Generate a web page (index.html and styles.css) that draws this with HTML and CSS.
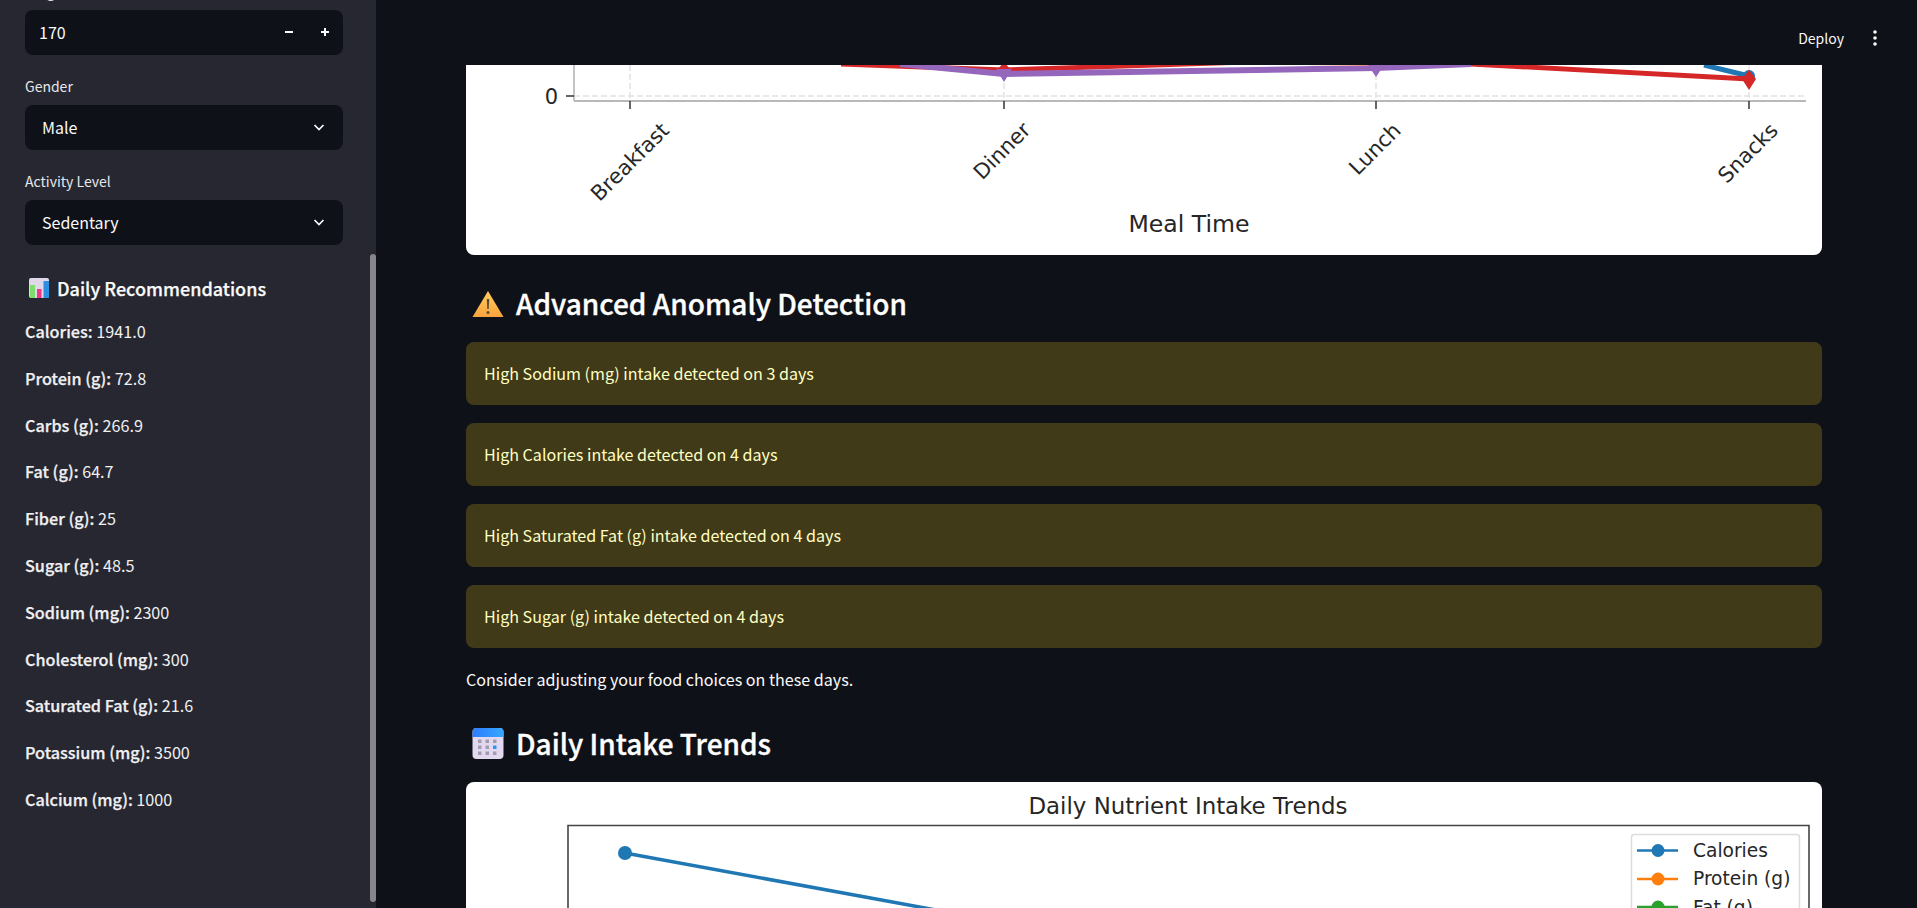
FILE: index.html
```html
<!DOCTYPE html>
<html lang="en">
<head>
    <meta charset="UTF-8">
    <title>Nutrition Dashboard</title>
    <link rel="stylesheet" href="styles.css">
</head>
<body>
    <aside class="sidebar">
        <div class="field field-cut">
            <label class="field-label">Height (cm)</label>
            <div class="control">
                <span class="number-value">170</span>
                <span class="stepper">
                    <svg width="12" height="12" viewBox="0 0 12 12"><path d="M2 6h8" stroke="#fafafa" stroke-width="2"/></svg>
                    <svg width="12" height="12" viewBox="0 0 12 12"><path d="M2 6h8M6 2v8" stroke="#fafafa" stroke-width="2"/></svg>
                </span>
            </div>
        </div>
        <div class="field">
            <label class="field-label">Gender</label>
            <div class="control control-select">
                <span>Male</span>
                <svg width="14" height="14" viewBox="0 0 14 14"><path d="M2.5 5l4.5 4.5L11.500 5" fill="none" stroke="#fafafa" stroke-width="1.7"/></svg>
            </div>
        </div>
        <div class="field">
            <label class="field-label">Activity Level</label>
            <div class="control control-select">
                <span>Sedentary</span>
                <svg width="14" height="14" viewBox="0 0 14 14"><path d="M2.5 5l4.5 4.5L11.500 5" fill="none" stroke="#fafafa" stroke-width="1.7"/></svg>
            </div>
        </div>

        <h4 class="side-title">
            <svg width="20" height="20" viewBox="0 0 20 20">
                <rect width="20" height="20" rx="2" fill="#ded8e8"/>
                <rect x="1" y="7" width="5" height="13" fill="#7fdc6e"/>
                <rect x="8" y="11" width="4.500" height="9" fill="#f0377f"/>
                <rect x="14.500" y="3" width="5.500" height="17" fill="#2c8fe0"/>
            </svg>
            Daily Recommendations
        </h4>
        <ul class="rec-list">
            <li><b>Calories:</b> 1941.0</li>
            <li><b>Protein (g):</b> 72.8</li>
            <li><b>Carbs (g):</b> 266.9</li>
            <li><b>Fat (g):</b> 64.7</li>
            <li><b>Fiber (g):</b> 25</li>
            <li><b>Sugar (g):</b> 48.5</li>
            <li><b>Sodium (mg):</b> 2300</li>
            <li><b>Cholesterol (mg):</b> 300</li>
            <li><b>Saturated Fat (g):</b> 21.6</li>
            <li><b>Potassium (mg):</b> 3500</li>
            <li><b>Calcium (mg):</b> 1000</li>
        </ul>
        <div class="side-scroll"></div>
    </aside>

    <div class="main">
        <header class="topbar">
            <span class="deploy">Deploy</span>
            <svg width="16" height="20" viewBox="0 0 16 20"><circle cx="8" cy="4" r="1.800" fill="#fafafa"/><circle cx="8" cy="10" r="1.800" fill="#fafafa"/><circle cx="8" cy="16" r="1.800" fill="#fafafa"/></svg>
        </header>

        <div class="content">
            <!-- first chart, scrolled under the top bar: coordinates are card x/y -->
            <div class="chart-card chart-meal">
                <svg width="1356" height="190" viewBox="0 0 1356 190">
                    <g stroke="#e2e2e2" stroke-width="1.500" stroke-dasharray="6 3" fill="none">
                        <path d="M108 31H1340"/>
                        <path d="M164 0V35M538 0V35M910 0V35M1283 0V35"/>
                    </g>
                    <path d="M108 36H1340" stroke="#b8b8b8" stroke-width="2"/>
                    <path d="M108 0V36" stroke="#c4c4c4" stroke-width="2"/>
                    <path d="M100 31h8M164 36v8M538 36v8M910 36v8M1283 36v8" stroke="#333" stroke-width="1.500"/>
                    <path d="M1238 0L1283 11" stroke="#1f77b4" stroke-width="5" fill="none"/>
                    <circle cx="1283" cy="11" r="6" fill="#1f77b4"/>
                    <path d="M375 -1L538 5L780 -3L1005 -1L1283 14" stroke="#d62728" stroke-width="5" fill="none"/>
                    <path d="M538 -3l6 7-6 4-6-4zM1283 5l7 9-7 11-7-11z" fill="#d62728"/>
                    <path d="M434 -1L538 9L910 3L1005 -1" stroke="#9467bd" stroke-width="6" fill="none"/>
                    <path d="M530 4h16l-8 13zM902 0h16l-8 12z" fill="#9467bd"/>
                    <text class="tick" x="92" y="39" text-anchor="end">0</text>
                    <text class="tick" x="164" y="104" text-anchor="middle" transform="rotate(-45 164 97)">Breakfast</text>
                    <text class="tick" x="536" y="93" text-anchor="middle" transform="rotate(-45 536 86)">Dinner</text>
                    <text class="tick" x="909" y="91" text-anchor="middle" transform="rotate(-45 909 84)">Lunch</text>
                    <text class="tick" x="1282" y="95" text-anchor="middle" transform="rotate(-45 1282 88)">Snacks</text>
                    <text class="axis-name" x="723" y="167" text-anchor="middle">Meal Time</text>
                </svg>
            </div>

            <h3 class="section-title">
                <svg width="32" height="28" viewBox="0 0 32 28">
                    <defs><linearGradient id="warnFill" x1="0" y1="0" x2="0" y2="1"><stop offset="0" stop-color="#ffcb5c"/><stop offset="1" stop-color="#fba33e"/></linearGradient></defs>
                    <path d="M16 1L31.500 27H.5z" fill="url(#warnFill)"/>
                    <path d="M14.800 9h2.400l-.5 10h-1.400z" fill="#5b4a3a"/>
                    <circle cx="16" cy="22.500" r="1.500" fill="#5b4a3a"/>
                </svg>
                Advanced Anomaly Detection
            </h3>

            <div class="alerts">
                <div class="alert">High Sodium (mg) intake detected on 3 days</div>
                <div class="alert">High Calories intake detected on 4 days</div>
                <div class="alert">High Saturated Fat (g) intake detected on 4 days</div>
                <div class="alert">High Sugar (g) intake detected on 4 days</div>
            </div>
            <p class="note">Consider adjusting your food choices on these days.</p>

            <h3 class="section-title section-trends">
                <svg width="32" height="32" viewBox="0 0 32 32">
                    <defs><linearGradient id="calTop" x1="0" y1="0" x2="1" y2="0"><stop offset="0" stop-color="#2f7bff"/><stop offset="1" stop-color="#35a8ff"/></linearGradient></defs>
                    <rect x="0.500" width="31" height="31" rx="4" fill="#e2d8f0"/>
                    <path d="M.5 9V4a4 4 0 0 1 4-4h23a4 4 0 0 1 4 4v5z" fill="url(#calTop)"/>
                    <g fill="#a39cb0">
                        <rect x="6" y="11.500" width="3.500" height="3.500"/><rect x="13.500" y="11.500" width="3.500" height="3.500"/><rect x="21" y="11.500" width="3.500" height="3.500"/>
                        <rect x="6" y="17.500" width="3.500" height="3.500"/><rect x="13.500" y="17.500" width="3.500" height="3.500"/>
                        <rect x="6" y="23.500" width="3.500" height="3.500"/><rect x="13.500" y="23.500" width="3.500" height="3.500"/><rect x="21" y="23.500" width="3.500" height="3.500"/>
                    </g>
                    <rect x="21" y="17.500" width="3.500" height="3.500" fill="#2d95f5"/>
                </svg>
                Daily Intake Trends
            </h3>

            <div class="chart-card chart-daily">
                <svg width="1356" height="126" viewBox="0 0 1356 126">
                    <text class="chart-title" x="722" y="32" text-anchor="middle">Daily Nutrient Intake Trends</text>
                    <path d="M102 130V43.500H1343V130" fill="none" stroke="#444" stroke-width="1.600"/>
                    <path d="M159 71L470 128" stroke="#1f77b4" stroke-width="3.500" fill="none"/>
                    <circle cx="159" cy="71" r="7" fill="#1f77b4"/>
                    <rect x="1165.500" y="52.500" width="168" height="90" rx="3" fill="#fff" stroke="#dcdcdc" stroke-width="1.500"/>
                    <path d="M1171 68.500h41" stroke="#1f77b4" stroke-width="2.500"/>
                    <circle cx="1192" cy="68.500" r="6.500" fill="#1f77b4"/>
                    <path d="M1171 97h41" stroke="#ff7f0e" stroke-width="2.500"/>
                    <circle cx="1192" cy="97" r="6.500" fill="#ff7f0e"/>
                    <path d="M1171 125h41" stroke="#2ca02c" stroke-width="2.500"/>
                    <circle cx="1192" cy="125" r="6.500" fill="#2ca02c"/>
                    <text class="legend-text" x="1227" y="75">Calories</text>
                    <text class="legend-text" x="1227" y="103">Protein (g)</text>
                    <text class="legend-text" x="1227" y="132">Fat (g)</text>
                </svg>
            </div>
        </div>
    </div>
</body>
</html>
```

FILE: styles.css
```css
*{
    margin: 0;
    padding: 0;
    box-sizing: border-box;
}

body{
    display: flex;
    width: 100%;
    height: 100vh;
    overflow: hidden;
    background: #0e1117;
    color: #fafafa;
    font-family: "Noto Sans CJK SC", "Noto Sans", sans-serif;
    font-size: 16px;
}

svg{
    display: block;
    flex: none;
}

/* sidebar */
.sidebar{
    position: relative;
    width: 376px;
    flex: none;
    height: 100%;
    overflow: hidden;
    background: #262730;
    padding: 0 33px 0 25px;
}

.field{
    margin-bottom: 21px;
}
.field-cut{
    margin-top: -19px;
}
.field-label{
    display: block;
    height: 22px;
    line-height: 20px;
    font-size: 14px;
    margin-bottom: 7px;
    color: #e8e8ea;
}
.control{
    display: flex;
    align-items: center;
    justify-content: space-between;
    height: 45px;
    background: #0e1117;
    border-radius: 8px;
    padding: 0 14px 1px;
}
.number-value{
    font-size: 16px;
}
.stepper{
    display: flex;
    gap: 24px;
    margin-right: -2px;
}
.control-select{
    padding: 0 17px 1px;
}

.side-title{
    display: flex;
    align-items: center;
    gap: 8px;
    height: 28px;
    margin: 29px 0 0 4px;
    font-size: 18px;
    font-weight: 500;
    -webkit-text-stroke: 0.250px;
}

.rec-list{
    list-style: none;
    margin-top: 18px;
}
.rec-list li{
    height: 46.800px;
    line-height: 22px;
    font-size: 16.200px;
    color: #f0f0f2;
}
.rec-list b{
    font-weight: 500;
    -webkit-text-stroke: 0.250px;
}

.side-scroll{
    position: absolute;
    top: 254px;
    right: 0;
    bottom: 6px;
    width: 6px;
    border-radius: 3px;
    background: #85858b;
}

/* main */
.main{
    flex: 1;
    min-width: 0;
    height: 100%;
    overflow: hidden;
}

.topbar{
    display: flex;
    align-items: center;
    justify-content: flex-end;
    gap: 23px;
    height: 65px;
    padding: 10px 34px 0 0;
}
.deploy{
    font-size: 14px;
}

.content{
    padding: 0 95px 0 90px;
}

.chart-card{
    background: #fff;
    overflow: hidden;
}
.chart-meal{
    height: 190px;
    border-radius: 0 0 8px 8px;
}
.chart-daily{
    height: 200px;
    border-radius: 8px 8px 0 0;
}

.tick{
    font-family: "DejaVu Sans", sans-serif;
    font-size: 21px;
    fill: #262626;
}
.axis-name{
    font-family: "DejaVu Sans", sans-serif;
    font-size: 23.600px;
    fill: #262626;
}
.chart-title{
    font-family: "DejaVu Sans", sans-serif;
    font-size: 22.900px;
    fill: #262626;
}
.legend-text{
    font-family: "DejaVu Sans", sans-serif;
    font-size: 18.600px;
    fill: #262626;
}

.section-title{
    display: flex;
    align-items: center;
    gap: 12px;
    height: 40px;
    margin: 29px 0 18px 6px;
    padding-bottom: 2px;
    font-size: 28px;
    font-weight: 500;
    -webkit-text-stroke: 0.350px;
    color: #fff;
}
.section-title svg{
    margin-top: 2px;
}
.section-trends{
    margin: 32px 0 18px 6px;
}

.alerts{
    display: flex;
    flex-direction: column;
    gap: 18px;
}
.alert{
    display: flex;
    align-items: center;
    height: 63px;
    padding: 0 18px 2px;
    border-radius: 8px;
    background: #403a18;
    color: #ffffc2;
    font-size: 16.100px;
}

.note{
    margin-top: 18px;
    height: 26px;
    line-height: 26px;
    font-size: 16.100px;
}
```
